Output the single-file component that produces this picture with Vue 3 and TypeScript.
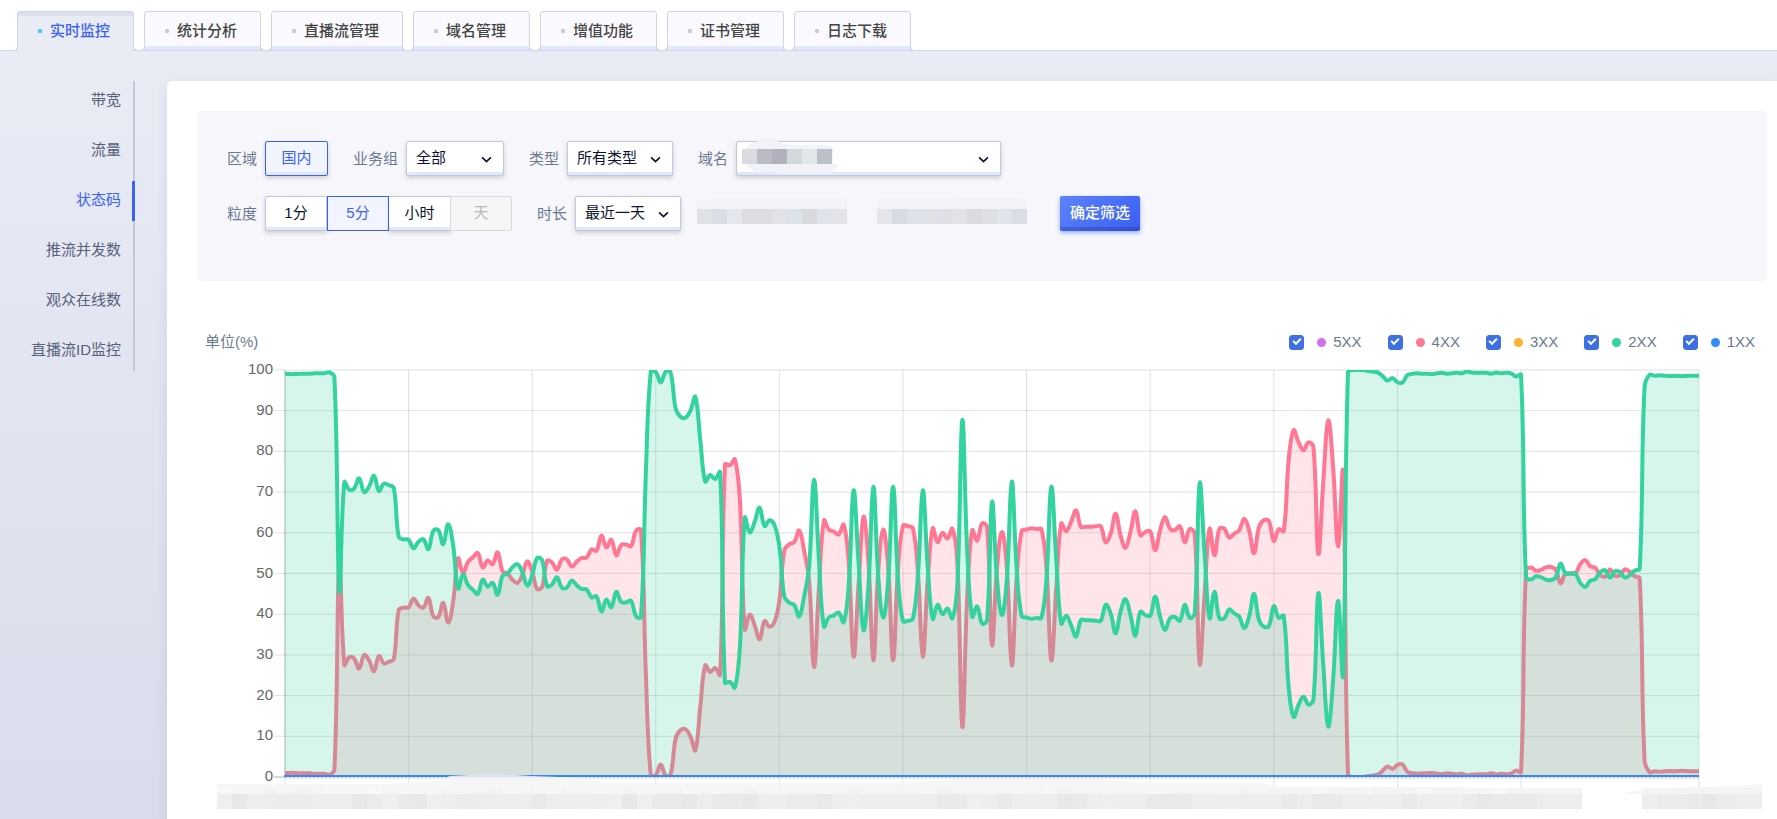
<script setup lang="ts">
import { computed, reactive, ref } from 'vue'

interface Series {
  name: string
  color: string
  visible: boolean
}

interface Point {
  x: number
  y: number
}

const tabs = ['实时监控', '统计分析', '直播流管理', '域名管理', '增值功能', '证书管理', '日志下载']
const activeTab = ref('实时监控')

const menu = ['带宽', '流量', '状态码', '推流并发数', '观众在线数', '直播流ID监控']
const activeMenu = ref('状态码')

const grains = [
  { label: '1分', disabled: false },
  { label: '5分', disabled: false },
  { label: '小时', disabled: false },
  { label: '天', disabled: true },
]
const activeGrain = ref('5分')

const series = reactive<Series[]>([
  { name: '5XX', color: '#d56ff0', visible: true },
  { name: '4XX', color: '#ff7793', visible: true },
  { name: '3XX', color: '#ffb02e', visible: true },
  { name: '2XX', color: '#33d39f', visible: true },
  { name: '1XX', color: '#338af5', visible: true },
])

// Share of 2XX responses, one sample per five minutes
const success: number[] = [
  99.1, 99, 99, 99.1, 99.1, 99.1, 99.2, 99.2, 99.2, 99.4, 98.2, 45.8, 72.4, 70.6, 70.9, 73.4, 70, 71.3, 74, 70.3,
  72.1, 71.7, 71, 59, 58.4, 58.3, 56.2, 57.8, 58.4, 56, 60.5, 60.7, 57.2, 62.1, 57, 46.3, 49.8, 47.2, 46, 45,
  48.5, 46.8, 47.7, 44.8, 49.4, 50, 51.5, 52.3, 50.4, 47, 49.6, 53.8, 53.3, 46.9, 47.3, 49.1, 46.5, 46.5, 48.3, 47.1,
  46.2, 46.1, 44.1, 44.4, 40.7, 43.6, 41.7, 45.5, 43, 42.9, 43.3, 39.5, 39.3, 75, 99.8, 99.5, 96.9, 99.6, 99.4, 90.6,
  88.5, 88.3, 90, 93.4, 82.8, 72.6, 74.2, 73.2, 74.9, 23.2, 23.4, 22, 32, 63.7, 60.1, 62.7, 66.2, 61.7, 63.1, 61.9,
  56.6, 44.3, 42.8, 42.3, 39.4, 44.3, 51.7, 73, 53.3, 37, 39.2, 39.7, 40.4, 38, 46.8, 70.4, 53, 36.1, 46.8, 71.3,
  49.2, 39.2, 48.4, 71.3, 48.4, 38.3, 38.4, 38.9, 49.2, 70.4, 51.7, 38.9, 42.3, 40, 41.4, 39, 47.6, 87.7, 55, 39.4,
  41.9, 37.7, 38.6, 67.6, 49, 39.8, 48.4, 72.6, 51, 39.5, 39.2, 38.9, 39.1, 39.1, 48.4, 71.3, 53.3, 37.7, 39.6, 37.3,
  34.5, 38.6, 38.5, 38.5, 38.4, 38.4, 42.3, 40.2, 35.3, 40.6, 43.7, 39.8, 34.7, 40.6, 39.8, 39.6, 44.3, 39.4, 36.1, 39,
  39.3, 38.4, 42.3, 39.1, 40.2, 72.2, 55, 39, 45.5, 39, 39, 41.2, 40.2, 39.4, 36.6, 39.4, 45, 38.6, 36.9, 37.1,
  42, 39.1, 39.6, 22.2, 14.8, 17.7, 19.7, 17.8, 18.9, 45.1, 27.5, 12.4, 23.8, 43.3, 25, 99.4, 100, 100, 100, 99.8,
  99.6, 99.4, 98.5, 97.4, 98, 97, 96.9, 98.7, 99.1, 99.2, 99.1, 99.1, 99, 99.2, 99.3, 99.1, 99.2, 99.3, 99.2, 99.6,
  99.4, 99.3, 99.3, 99.3, 99.1, 99.4, 99.2, 99.3, 99.2, 98.4, 98.8, 49.2, 48.5, 49.3, 49.1, 48.5, 48.4, 49, 52.4, 50,
  50, 50, 47.7, 46.7, 48.2, 48.6, 50.3, 50.8, 49, 50.6, 50.4, 49, 49.6, 50.7, 51.2, 95.9, 98.8, 98.6, 98.7, 98.6,
  98.5, 98.6, 98.5, 98.5, 98.6, 98.6, 98.6,
]

const plot = { left: 88, right: 1502, top: 19, bottom: 426 }
const step = (plot.right - plot.left) / (success.length - 1)
const toY = (value: number) => plot.bottom - (value * (plot.bottom - plot.top)) / 100
const clampY = (y: number) => Math.min(plot.bottom, Math.max(plot.top, y))

function curve(values: number[]): string {
  const tension = 0.4
  const pts: Point[] = values.map((v, i) => ({ x: plot.left + i * step, y: toY(v) }))
  const handles = pts.map((cur, i) => {
    const prev = pts[i - 1] ?? cur
    const next = pts[i + 1] ?? cur
    const before = Math.hypot(cur.x - prev.x, cur.y - prev.y)
    const after = Math.hypot(next.x - cur.x, next.y - cur.y)
    const a = (tension * before) / (before + after)
    const b = (tension * after) / (before + after)
    const dx = next.x - prev.x
    const dy = next.y - prev.y
    return {
      inn: { x: cur.x - a * dx, y: clampY(cur.y - a * dy) },
      out: { x: cur.x + b * dx, y: clampY(cur.y + b * dy) },
    }
  })
  const f = (p: Point) => `${p.x.toFixed(1)} ${p.y.toFixed(1)}`
  return pts.reduce(
    (d, p, i) => (i === 0 ? `M${f(p)}` : `${d}C${f(handles[i - 1].out)} ${f(handles[i].inn)} ${f(p)}`),
    '',
  )
}

const close = `L${plot.right} ${plot.bottom}L${plot.left} ${plot.bottom}Z`
const greenLine = computed(() => curve(success))
const redLine = computed(() => curve(success.map((v) => 100 - v)))

const yTicks = [100, 90, 80, 70, 60, 50, 40, 30, 20, 10, 0]
const xTicks = [...Array.from({ length: 11 }, (_, i) => plot.left + i * 25 * step), plot.right]

// Masked time labels: one hex digit per tile, the low digit of each channel
const lowerRow =
  'f8edccddd8bfa8fdbcddd9ddedf8faa8daa8debb9dfdddddaa' +
  'feaddd8adfdda9addedddad9addedaddeb8aaadddd9bdebba8bdebba8'
const upperRow =
  '845353467584656454365574465365' + '47564356446535445634455646345655654456354456445345644658'
const tiles = Array.from({ length: 103 }, (_, i) => {
  const c = lowerRow[i] ?? 'b'
  const u = upperRow[i] ?? '4'
  return {
    x: 20 + i * 15,
    lower: `#e${c}e${c}e${c}`,
    upper: `#f${u}f${u}f${u}`,
    gap: i > 90 && i < 95,
  }
}).filter((t) => !t.gap)

const domainMask = ['#dadbde', '#bcbbc5', '#b3afbc', '#d3d8dc', '#e2e6e8', '#bdc0c9']
const rangeMask = [
  '#e0e1e5', '#d9dde5', '#e6e7ec', '#dbdde2', '#dddee2', '#e1e3e8', '#dce2ea', '#d9dae0', '#dee3ec', '#e2e4e9', '#f6f6fb',
  '#f6f6fb', '#e5e6eb', '#d6dbe4', '#dde1e9', '#e0e1e5', '#dde1e7', '#e1e3e9', '#dbdce0', '#dfe0e4', '#e1e4ea', '#d9dde6',
]
</script>

<template>
  <div class="page">
    <nav class="tabs" aria-label="主导航">
      <button
        v-for="tab in tabs"
        :key="tab"
        type="button"
        class="tab"
        :class="{ active: tab === activeTab }"
        @click="activeTab = tab"
      >
        <i class="dot"></i><span>{{ tab }}</span>
      </button>
    </nav>

    <div class="body">
      <nav class="side" aria-label="监控项">
        <a
          v-for="item in menu"
          :key="item"
          href="#"
          class="side-item"
          :class="{ active: item === activeMenu }"
          @click.prevent="activeMenu = item"
          >{{ item }}</a
        >
      </nav>

      <main class="panel">
        <form class="filters" @submit.prevent>
          <div class="row">
            <div class="field">
              <span class="label">区域</span>
              <button type="button" class="seg on single">国内</button>
            </div>
            <div class="field">
              <label class="label" for="group">业务组</label>
              <div class="select w-s">
                <select id="group"><option>全部</option></select>
                <svg viewBox="0 0 10 6"><path d="M1 1 5 5 9 1" /></svg>
              </div>
            </div>
            <div class="field">
              <label class="label" for="type">类型</label>
              <div class="select w-m">
                <select id="type"><option>所有类型</option></select>
                <svg viewBox="0 0 10 6"><path d="M1 1 5 5 9 1" /></svg>
              </div>
            </div>
            <div class="field">
              <label class="label" for="domain">域名</label>
              <div class="select w-l">
                <select id="domain"></select>
                <svg viewBox="0 0 10 6"><path d="M1 1 5 5 9 1" /></svg>
                <svg class="domain-mask" viewBox="0 0 98 35">
                  <path
                    d="M0 17C1 8 7 2 14 1L16 0H35L42 3 60 4H80Q88 4 92 8L90 23H96Q94 32 84 33H42L24 30 18 32Q4 29 0 17Z"
                    fill="#f2f3f8"
                  />
                  <rect
                    v-for="(c, i) in domainMask"
                    :key="i"
                    :x="i * 15"
                    y="8"
                    width="15"
                    height="15"
                    :fill="c"
                  />
                </svg>
              </div>
            </div>
          </div>
          <div class="row">
            <div class="field">
              <span class="label">粒度</span>
              <div class="group">
                <button
                  v-for="g in grains"
                  :key="g.label"
                  type="button"
                  class="seg"
                  :class="{ on: g.label === activeGrain }"
                  :disabled="g.disabled"
                  @click="activeGrain = g.label"
                >
                  {{ g.label }}
                </button>
              </div>
            </div>
            <div class="field">
              <label class="label" for="span">时长</label>
              <div class="select w-m">
                <select id="span"><option>最近一天</option></select>
                <svg viewBox="0 0 10 6"><path d="M1 1 5 5 9 1" /></svg>
              </div>
              <svg class="range-mask" viewBox="0 0 330 34">
                <path d="M0 5 16 2H150V13H0ZM180 2H250L268 0H310L330 3V13H180Z" fill="#f2f2f7" />
                <rect
                  v-for="(c, i) in rangeMask"
                  :key="i"
                  :x="i * 15"
                  y="12"
                  width="15"
                  height="15"
                  :fill="c"
                />
              </svg>
            </div>
            <button type="submit" class="submit">确定筛选</button>
          </div>
        </form>

        <div class="chart-head">
          <span>单位(%)</span>
          <div class="legend">
            <label v-for="s in series" :key="s.name" class="legend-item">
              <input v-model="s.visible" type="checkbox" />
              <svg class="bullet" viewBox="0 0 10 10"><circle cx="5" cy="5" r="5" :fill="s.color" /></svg>
              <span>{{ s.name }}</span>
            </label>
          </div>
        </div>

        <svg class="chart" viewBox="0 1 1570 466" role="img" aria-label="状态码占比">
          <defs>
            <clipPath id="plot-area">
              <rect :x="plot.left - 1" :y="plot.top" :width="plot.right - plot.left + 1" :height="plot.bottom - plot.top" />
            </clipPath>
          </defs>
          <g class="grid">
            <line v-for="v in yTicks" :key="v" :x1="plot.left - 11" :x2="plot.right" :y1="toY(v)" :y2="toY(v)" />
            <line v-for="x in xTicks" :key="x" :x1="x" :x2="x" :y1="plot.top" :y2="plot.bottom + 12" />
            <line class="axis" :x1="plot.left" :x2="plot.left" :y1="plot.top" :y2="plot.bottom" />
            <line class="axis" :x1="plot.left - 11" :x2="plot.left" :y1="plot.bottom" :y2="plot.bottom" />
          </g>
          <g class="y-labels">
            <text v-for="v in yTicks" :key="v" x="76" :y="toY(v) + 4">{{ v }}</text>
          </g>
          <g clip-path="url(#plot-area)">
            <g v-if="series[1].visible">
              <path :d="redLine + close" fill="#ff7793" fill-opacity=".2" />
              <path :d="redLine" class="line" stroke="#ff7793" />
            </g>
            <g v-if="series[3].visible">
              <path :d="greenLine + close" fill="#33d39f" fill-opacity=".2" />
              <path :d="greenLine" class="line" stroke="#33d39f" />
            </g>
            <line
              v-if="series[4].visible"
              class="base"
              stroke="#338af5"
              :x1="plot.left - 1"
              :x2="plot.right"
              :y1="plot.bottom - 1"
              :y2="plot.bottom - 1"
            />
          </g>
          <line
            v-if="series[0].visible"
            class="dotted"
            :x1="plot.left"
            :x2="plot.right"
            :y1="plot.bottom + 1"
            :y2="plot.bottom + 1"
          />
          <path
            d="M20 433H190L240 430 253 425Q290 422 334 425L390 427 410 432H620L720 431 760 428H900L940 431H1060L1080 436H1260L1385 440V443H20ZM1430 441 1460 437 1540 435 1565 433V443H1430Z"
            fill="#f4f4f4"
            fill-opacity=".85"
          />
          <g v-for="t in tiles" :key="t.x">
            <rect :x="t.x" y="437" width="15" height="6" :fill="t.upper" />
            <rect :x="t.x" y="443" width="15" height="15" :fill="t.lower" />
          </g>
        </svg>
      </main>
    </div>
  </div>
</template>

<style>
body {
  margin: 0;
  background: #d9dceb;
}
</style>

<style scoped>
.page {
  display: flex;
  flex-direction: column;
  min-height: 100vh;
  overflow: hidden;
  box-sizing: border-box;
  background: #fff;
  font: 15px/20px 'Liberation Sans', 'Noto Sans CJK SC', sans-serif;
  color: #6b7890;
}

button,
select {
  font: inherit;
}

.tabs {
  display: flex;
  gap: 10px;
  height: 39px;
  padding: 11px 17px 0;
  border-bottom: 1px solid #d0d4ea;
}

.tab {
  position: relative;
  display: flex;
  align-items: center;
  gap: 8px;
  height: 40px;
  box-sizing: border-box;
  padding: 0 23px 0 20px;
  border: 1px solid #d0d4ea;
  border-radius: 3px 3px 0 0;
  background: #fafafe;
  box-shadow: inset 0 -4px #e2e8fc;
  color: #444;
  font-weight: 500;
}

.tab::before,
.tab::after {
  content: '';
  position: absolute;
  bottom: -1px;
  width: 5px;
  height: 5px;
  border: 0 solid #d0d4ea;
  border-bottom-width: 1px;
  background: #fff;
}

.tab::before {
  left: -6px;
  border-right-width: 1px;
  border-bottom-right-radius: 5px;
}

.tab::after {
  right: -6px;
  border-left-width: 1px;
  border-bottom-left-radius: 5px;
}

.tab.active {
  border-bottom-color: #e9ecf5;
  background: #e9ecf5;
  box-shadow: inset 0 4px #dddff0;
  color: #3b62f6;
}

.dot {
  width: 4px;
  height: 4px;
  border-radius: 1px;
  background: #c8cbd4;
}

.active .dot {
  background: #35d0fa;
}

.body {
  display: flex;
  flex: 1;
  align-items: stretch;
  padding-top: 30px;
  background: linear-gradient(#e9ecf5, #e2e4f0 45%, #d9dceb);
}

.side {
  display: flex;
  flex-direction: column;
  align-self: flex-start;
  gap: 10px;
  width: 133px;
  flex: none;
  margin-right: 32px;
  border-right: 2px solid #c0c8da;
}

.side-item {
  position: relative;
  height: 40px;
  padding-right: 12px;
  color: #56617a;
  line-height: 38px;
  text-align: right;
  text-decoration: none;
}

.side-item.active {
  color: #3b62f6;
}

.side-item.active::after {
  content: '';
  position: absolute;
  top: 0;
  right: -2px;
  width: 3px;
  height: 40px;
  background: #3b62f6;
}

.panel {
  flex: 1;
  min-width: 0;
  padding: 30px 10px 0 30px;
  border-radius: 5px 0 0 0;
  background: #fff;
  box-shadow: 0 4px 12px rgba(60, 70, 120, 0.12);
}

.filters {
  display: flex;
  flex-direction: column;
  gap: 20px;
  padding: 30px 30px 50px;
  border-radius: 5px;
  background: #f6f6fb;
}

.row {
  display: flex;
  align-items: center;
  gap: 25px;
}

.field {
  display: flex;
  align-items: center;
  gap: 8px;
}

.seg,
.select {
  height: 35px;
  box-sizing: border-box;
  border: 1px solid #c0c8da;
  background: #fff;
  box-shadow:
    inset 0 -3px #e2e8fc,
    0 2px 4px rgba(50, 50, 60, 0.2);
  color: #0c1230;
}

.group {
  display: flex;
}

.seg {
  width: 62px;
  padding: 0 0 2px;
}

.seg + .seg {
  border-left-width: 0;
}

.seg:first-child {
  border-radius: 2px 0 0 2px;
}

.seg:last-child {
  border-radius: 0 2px 2px 0;
}

.seg.single {
  width: 63px;
  border-radius: 2px;
}

.seg.on {
  border: 1px solid #3b62f6;
  background: #f2f5ff;
  box-shadow: none;
  color: #3b62f6;
}

.seg.on.single {
  box-shadow:
    inset 0 -3px #e2e8fc,
    0 2px 4px rgba(50, 50, 60, 0.2);
}

.seg:disabled {
  margin-left: -1px;
  border-color: #d9d9d9;
  border-left-width: 1px;
  background: #f6f6f6;
  box-shadow: none;
  color: #b8b8b8;
}

.select {
  position: relative;
  border-radius: 2px;
}

.select select {
  display: block;
  width: 100%;
  height: 33px;
  padding: 0 26px 2px 9px;
  border: 0;
  background: transparent;
  color: inherit;
  appearance: none;
}

.select svg {
  position: absolute;
  top: 14px;
  right: 11px;
  width: 11px;
  height: 7px;
  fill: none;
  stroke: #0c1230;
  stroke-width: 1.5;
  pointer-events: none;
}

.select .domain-mask {
  top: -1px;
  right: auto;
  left: 5px;
  width: 98px;
  height: 35px;
  stroke: none;
}

.w-s {
  width: 98px;
}

.w-m {
  width: 106px;
}

.w-l {
  width: 265px;
}

.range-mask {
  width: 330px;
  height: 34px;
  margin-left: 8px;
}

.submit {
  height: 35px;
  margin-left: 8px;
  padding: 0 10px 2px;
  border: 0;
  border-radius: 2px;
  background: linear-gradient(135deg, #5c83fa, #3a5ef2);
  box-shadow:
    inset 0 -4px rgba(30, 50, 140, 0.3),
    0 2px 4px rgba(59, 98, 246, 0.5);
  color: #fff;
  font-weight: 500;
}

.chart-head {
  display: flex;
  justify-content: space-between;
  margin-top: 51px;
  padding: 0 12px 0 8px;
}

.legend {
  display: flex;
  gap: 26px;
}

.legend-item {
  display: flex;
  align-items: center;
}

.legend-item input {
  display: flex;
  align-items: center;
  justify-content: center;
  width: 15px;
  height: 15px;
  box-sizing: border-box;
  margin: 0 13px 0 0;
  border: 1px solid #3f70e2;
  border-radius: 3px;
  appearance: none;
}

.legend-item input:checked {
  background: #3f70e2;
}

.legend-item input:checked::after {
  content: '';
  width: 6px;
  height: 3px;
  margin-bottom: 3px;
  border: solid #fff;
  border-width: 0 0 2px 2px;
  transform: rotate(-45deg);
}

.bullet {
  width: 9px;
  height: 9px;
  margin-right: 7px;
}

.chart {
  display: block;
  width: 100%;
  height: auto;
}

.grid line {
  stroke: rgba(0, 0, 0, 0.12);
  stroke-width: 1;
}

.grid .axis {
  stroke: rgba(0, 0, 0, 0.2);
}

.y-labels {
  fill: #666;
  font-size: 15px;
  text-anchor: end;
}

.line {
  fill: none;
  stroke-width: 4;
  stroke-linejoin: round;
}

.base {
  stroke-width: 2;
}

.dotted {
  stroke: #c9a9dd;
  stroke-dasharray: 2 2;
}
</style>
